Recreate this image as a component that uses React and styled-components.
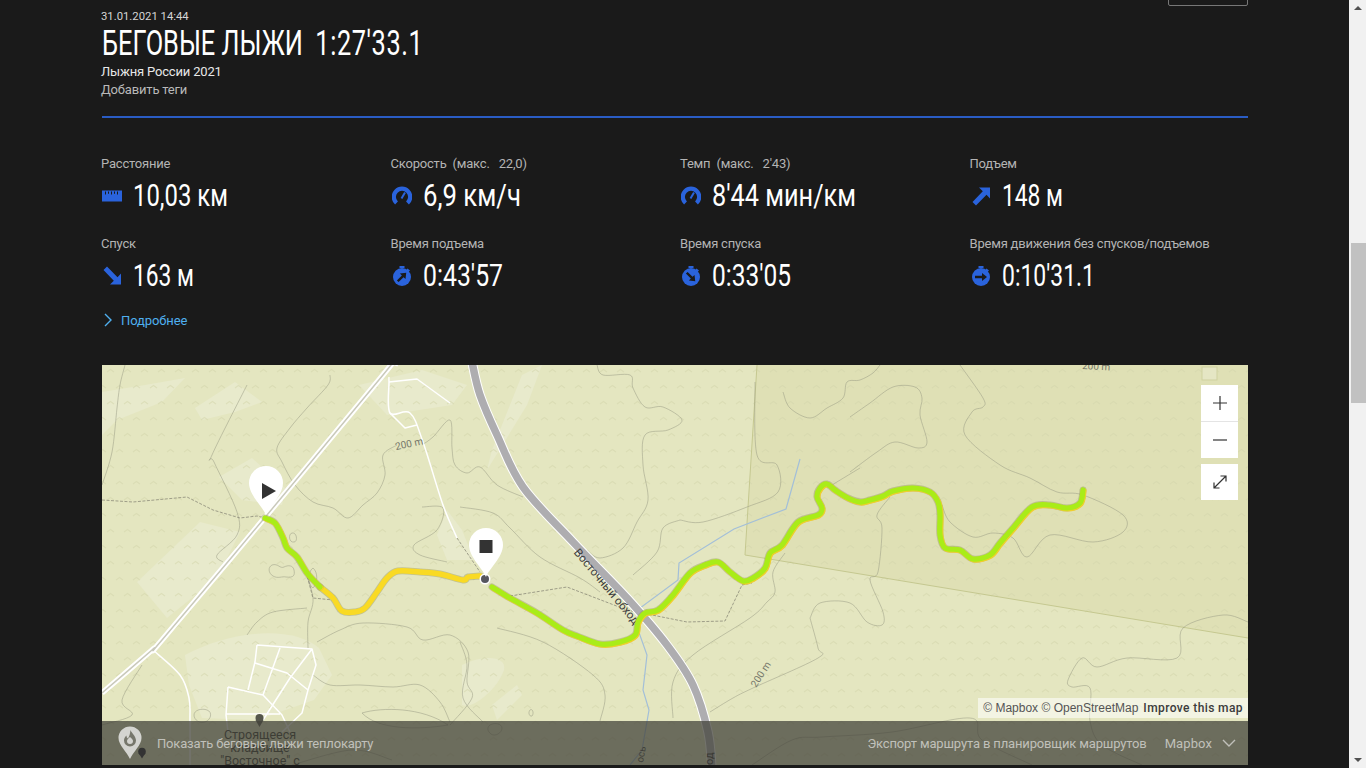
import React from 'react'
import styled, { createGlobalStyle } from 'styled-components'

const GlobalStyle = createGlobalStyle`
    html, body { margin:0; padding:0; height:768px; overflow:hidden; background:#1a1a1a; }
    #root { height:768px; }
    * { box-sizing:border-box; }
`

const BLUE = '#2a63dc'

const Shell = styled.div`
    display:flex;
    height:768px;
    overflow:hidden;
    font-family:Roboto, "Liberation Sans", sans-serif;
    color:#e6e6e6;
    background:#1a1a1a;
`
const Page = styled.main`
    flex:1;
    min-width:0;
    padding:0 101px 0 102px;
`
const Rail = styled.div`
    width:17px;
    background:#f1f1f1;
    display:flex;
    flex-direction:column;
    align-items:center;
    justify-content:space-between;
    padding:6px 0;
`
const RailMiddle = styled.div`
    flex:1;
    width:100%;
    padding:233px 0 0 2px;
`
const Thumb = styled.div`
    width:15px;
    height:160px;
    background:#c1c1c1;
`
const Arrow = styled.div`
    width:0;
    height:0;
    border-left:4px solid transparent;
    border-right:4px solid transparent;
    ${p => p.$down ? 'border-top:4px solid #505050;' : 'border-bottom:4px solid #505050;'}
`
const Header = styled.header`
    display:flex;
    justify-content:space-between;
    align-items:flex-start;
    height:118px;
    border-bottom:2px solid #2a5cc4;
`
const HeaderText = styled.div`
    padding-top:10px;
`
const DateLine = styled.div`
    font-size:11.300px;
    line-height:14px;
    margin-left:-1px;
    color:#d6d6d6;
`
const Title = styled.h1`
    margin:0;
    font:400 34.500px/39px Roboto, sans-serif;
    color:#fff;
    white-space:pre;
    transform:scaleX(.735);
    transform-origin:left center;
`
const TitleTime = styled.span`
    letter-spacing:.8px;
`
const Name = styled.div`
    margin:0 0 0 -1px;
    font-size:13px;
    line-height:18px;
    letter-spacing:-.18px;
    color:#e8e8e8;
`
const Tags = styled.div`
    margin-left:-1px;
    font-size:13px;
    line-height:18px;
    letter-spacing:-.18px;
    color:#b9b9b9;
`
const TopButton = styled.div`
    width:80px;
    height:36px;
    margin-top:-30px;
    border:1px solid #777;
    border-radius:2px;
`
const Stats = styled.section`
    display:grid;
    grid-template-columns:repeat(3, 289.500px) 1fr;
    grid-auto-rows:80px;
    padding-top:36px;
`
const Stat = styled.div`
    display:flex;
    flex-direction:column;
`
const Label = styled.div`
    font-size:13px;
    line-height:20px;
    margin-left:-1px;
    letter-spacing:-.2px;
    color:#b4b4b4;
    white-space:pre;
`
const ValueRow = styled.div`
    display:flex;
    align-items:center;
    gap:11px;
    height:38px;
    margin-top:3px;
`
const IconBox = styled.span`
    width:20px;
    height:20px;
    flex:none;
    display:flex;
`
const Value = styled.span`
    font:400 31px/38px Roboto, sans-serif;
    color:#fff;
    white-space:pre;
    display:inline-block;
    transform:scaleX(${p => p.$squeeze});
    transform-origin:left center;
`
const More = styled.div`
    display:flex;
    align-items:center;
    gap:9px;
    height:20px;
    margin-top:-4px;
    padding-left:2px;
    color:#4fb0f0;
    font-size:13px;
    letter-spacing:-.1px;
`
const MapFrame = styled.section`
    position:relative;
    height:400px;
    margin-top:35px;
    overflow:hidden;
    background:#e6e7c4;
`
const MapSvg = styled.svg`
    display:block;
    width:100%;
    height:100%;
`
const Controls = styled.div`
    position:absolute;
    top:20px;
    right:10px;
    display:flex;
    flex-direction:column;
    gap:6px;
`
const ControlGroup = styled.div`
    width:37px;
    background:#fff;
    display:flex;
    flex-direction:column;
`
const ControlButton = styled.div`
    height:36px;
    display:flex;
    align-items:center;
    justify-content:center;
    color:#333;
    & + & { border-top:1px solid #e4e4e4; height:37px; }
`
const Attribution = styled.div`
    position:absolute;
    right:0;
    top:333px;
    height:20px;
    padding:0 5px;
    display:flex;
    align-items:center;
    gap:5px;
    background:rgba(255,255,255,.55);
    font:12px/20px "Liberation Sans", sans-serif;
    color:#555;
`
const Improve = styled.span`
    color:#3c3c3c;
    font-family:Roboto, sans-serif;
    font-weight:500;
    letter-spacing:.4px;
`
const Bar = styled.div`
    position:absolute;
    left:0;
    right:0;
    bottom:0;
    height:44px;
    background:rgba(66,66,58,.74);
    display:flex;
    align-items:center;
    padding:0 12px 0 16px;
    font-size:13px;
    color:#c0c0ba;
`
const BarLeft = styled.div`
    display:flex;
    align-items:center;
    gap:7px;
    flex:1;
    letter-spacing:-.18px;
`
const BarRight = styled.div`
    display:flex;
    align-items:center;
    letter-spacing:-.15px;
`
const Provider = styled.span`
    margin-left:18px;
    margin-right:10px;
    letter-spacing:.1px;
`

const Ruler = () => (
    <svg width="20" height="20" viewBox="0 0 20 20">
        <path fill={BLUE} fillRule="evenodd" d="M0 4.500h20v11H0zM3 5.500v3h1v-3zM6 5.500v2.200h1v-2.200zM9 5.500v3h1v-3zM12 5.500v2.200h1v-2.200zM15 5.500v3h1v-3z" />
    </svg>
)
const Gauge = () => (
    <svg width="20" height="20" viewBox="0 0 20 20">
        <path fill="none" stroke={BLUE} strokeWidth="4.200" d="M4.500 17A8.200 8.200 0 1 1 15.500 17" />
        <path fill="none" stroke={BLUE} strokeWidth="2" d="M9.500 12.500l3.500-6" />
    </svg>
)
const DiagArrow = ({ down }) => (
    <svg width="20" height="20" viewBox="0 0 20 20">
        <path fill={BLUE} transform={down ? 'translate(0 20) scale(1 -1)' : undefined} d="M8 1.500h11v11l-3.500-3.800L5 19.500 1.500 16 11.800 5.300z" />
    </svg>
)
const Stopwatch = ({ dir }) => {
    const rot = dir === 'up' ? -45 : dir === 'down' ? 45 : 0
    return (
        <svg width="20" height="20" viewBox="0 0 20 20">
            <path fill={BLUE} d="M7.500 0h5v2h-5zM15.500 2.500l2.500 2-1.500 1.500-2.300-2z" />
            <circle cx="10" cy="11" r="9" fill={BLUE} />
            <g transform={`rotate(${rot} 10 11)`}>
                <path fill="#1a1a1a" d="M4 9.800h7V7l5 4-5 4v-2.800H4z" />
            </g>
        </svg>
    )
}

const stats = [
    { label: 'Расстояние', icon: <Ruler />, value: '10,03 км', squeeze: .77 },
    { label: 'Скорость  (макс.   22,0)', icon: <Gauge />, value: '6,9 км/ч', squeeze: .83 },
    { label: "Темп  (макс.   2'43)", icon: <Gauge />, value: "8'44 мин/км", squeeze: .815 },
    { label: 'Подъем', icon: <DiagArrow />, value: '148 м', squeeze: .735 },
    { label: 'Спуск', icon: <DiagArrow down />, value: '163 м', squeeze: .735 },
    { label: 'Время подъема', icon: <Stopwatch dir="up" />, value: "0:43'57", squeeze: .8 },
    { label: 'Время спуска', icon: <Stopwatch dir="down" />, value: "0:33'05", squeeze: .79 },
    { label: 'Время движения без спусков/подъемов', icon: <Stopwatch dir="flat" />, value: "0:10'31.1", squeeze: .74 },
]

// catmull-rom through the traced points, so lines don't look like polygons
const smooth = (str) => {
    const p = str.trim().split(/\s+/).map(s => s.split(',').map(Number))
    let d = `M${p[0][0]} ${p[0][1]}`
    for (let i = 0; i < p.length - 1; i++) {
        const a = p[i - 1] || p[i]
        const b = p[i]
        const c = p[i + 1]
        const e = p[i + 2] || c
        const c1 = [b[0] + (c[0] - a[0]) / 6, b[1] + (c[1] - a[1]) / 6]
        const c2 = [c[0] - (e[0] - b[0]) / 6, c[1] - (e[1] - b[1]) / 6]
        d += `C${c1[0].toFixed(1)} ${c1[1].toFixed(1)} ${c2[0].toFixed(1)} ${c2[1].toFixed(1)} ${c[0]} ${c[1]}`
    }
    return d
}

const contours = [
    '23,0 18,20 15,43 10,87 0,120',
    '228,10 226,20 205,43 188,63 175,83 180,97 193,120 211,137 231,143 246,153 261,140 275,128 283,110 281,90 295,80',
    '320,80 331,72 348,55 350,83 353,100 365,108 378,102 395,120 421,132',
    '145,20 110,90 112,97 135,147 135,170 115,190 121,197',
    '201,200 211,233 206,257 206,283',
    '145,270 155,257 171,247 205,243',
    '215,277 238,265 261,258 305,262 321,275 348,270 366,287 365,317 370,333 348,360',
    '211,310 228,320 258,320 291,322 318,320 338,337 348,357',
    '320,142 341,143 335,165 312,180 318,190 345,197',
    '358,142 391,148 408,163 438,192 478,213 498,227',
    '495,0 501,10 528,10 531,23 543,42 561,42 580,55 566,65 543,70 541,100 546,135 535,157 521,183 498,193 485,185',
    '578,155 561,163 555,187 531,210',
    '681,27 688,43 708,53 725,43 741,33 745,17 758,15 771,8 778,0',
    '653,17 655,90 675,100 676,127 645,142 601,157 578,155',
    '758,103 725,123',
    '683,188 671,207 673,227 665,237 648,253 591,290 571,317 571,353',
    '708,253 718,238 748,238 765,257 780,260 781,247 768,215 776,207 780,163 775,150 788,132',
    '708,253 716,283 716,293 651,323 631,333 608,347',
    '358,277 365,300 361,333 381,357',
    '395,263 441,277 491,310 503,330 498,356',
    '748,52 768,38 791,22 813,22 820,33 818,50 825,77 816,83 793,77 775,87 748,107',
    '858,0 881,33 881,42 870,47 863,70 898,100 928,113 955,127 981,130 1021,150 1021,167 991,177 948,170 925,192 911,173 891,168 871,172 848,157 840,140',
    '1146,257 1121,250 1081,263 1075,293 1025,293 995,302 980,293 966,315 970,322 988,323 988,356 1000,380 1040,400',
    '650,400 690,375 720,372 790,367 868,353 880,375 930,400',
    '0,360 30,350 20,335 40,300',
    '190,400 250,385 290,395',
]

const loops = [
    'M190 168c5 -1 6 9 2 9 -5 1 -6 -8 -2 -9',
    'M170 200c6 -2 8 4 12 2 4 -2 9 -2 10 3 1 5 0 8 -8 7 -4 -1 -8 2 -13 -1 -5 -3 -5 -9 -1 -11',
    'M211 203c5 4 5 15 0 20 -5 -3 -6 -16 0 -20',
    'M92 350c0 -5 8 -7 13 -5 6 2 4 10 -2 12 -5 2 -11 -2 -11 -7',
    'M260 348c20 -6 60 -6 86 12 -30 5 -70 5 -86 -12',
    'M388 360c5 -3 12 -1 12 3 0 5 -7 9 -11 6 -4 -3 -4 -7 -1 -9',
    'M428 345c3 -2 4 4 2 6 -3 1 -4 -4 -2 -6',
]

// light clearings, very faint
const clearings = [
    'M35 217L98 157 138 167 115 213 65 253z',
    'M83 290C130 265 190 260 217 283L230 310 212 335 155 355 100 353 87 320z',
    'M117 112L150 93 183 123 180 140 140 135z',
    'M93 43L133 17 160 37 133 47 100 55z',
    'M0 27L43 20 83 13 60 37 15 55 0 70z',
    'M257 20L320 5 365 20 350 40 285 50z',
    'M335 170L345 145 360 165 372 195 345 195z',
    'M360 300C380 290 405 290 402 305 395 325 370 345 360 340z',
    'M390 340L415 320 420 330 395 355z',
    'M390 85L420 10 440 0 425 40 385 105z',
]

const Track = ({ d, yellow }) => (
    <g fill="none" strokeLinecap="round" strokeLinejoin="round">
        <path d={d} stroke="#8b8b52" strokeOpacity=".4" strokeWidth="7" />
        {yellow && <path d={d} stroke="#f9da24" strokeWidth="5.400" />}
        {!yellow && <path d={d} stroke="#f0cf2c" strokeWidth="5.400" transform="translate(.9 .9)" />}
        {!yellow && <path d={d} stroke="#a9ec18" strokeWidth="5.200" />}
    </g>
)

const Pin = ({ x, y, children }) => (
    <g transform={`translate(${x} ${y})`}>
        <path d="M0 0C-3 -8 -17 -20 -17 -32A17 17 0 0 1 17 -32C17 -20 3 -8 0 0z" fill="#fff" />
        {children}
    </g>
)

const rail = smooth('290,-3 281,10 165,150 60,275 50,285 0,328')
const motorway = smooth('370,-3 378,30 395,70 421,122 471,177 525,233 565,280 591,320 606,367 610,405')

const MapDrawing = () => (
    <MapSvg viewBox="0 0 1146 400">
        <defs>
            <pattern id="dots" width="34" height="32" patternUnits="userSpaceOnUse">
                <path d="M5 7l3.500 -2.500 3.500 2.500M22 7l3.500 -2.500 3.500 2.500M-3 23l3.500 -2.500 3.500 2.500M14 23l3.500 -2.500 3.500 2.500M31 23l3.500 -2.500 3.500 2.500" fill="none" stroke="#d3d5aa" strokeOpacity=".55" strokeWidth="1.200" />
            </pattern>
        </defs>
        <rect width="1146" height="400" fill="#e4e6c0" />
        <g fill="#e8eacc">
            {clearings.map((d, i) => <path key={i} d={d} />)}
        </g>
        <path d="M655 0L643 190 1146 273V0z" fill="#dfe0b5" />
        <rect width="1146" height="400" fill="url(#dots)" />
        <path d="M655 0L643 190 1146 273" fill="none" stroke="#c5c890" strokeWidth="1" />
        <rect x="1100" y="2" width="15" height="13" fill="#e5e6c4" stroke="#cfd1a0" />

        <g fill="none" stroke="#9a9c84" strokeOpacity=".75" strokeWidth=".7">
            {contours.map((d, i) => <path key={i} d={smooth(d)} />)}
            {loops.map((d, i) => <path key={i} d={d} />)}
        </g>
        <g fill="none" stroke="#8b8a78" strokeWidth=".8" strokeDasharray="3 1.500">
            <path d="M0 135L31 137 85 132 111 145 138 153 155 151 163 153" />
            <path d="M203 203L211 233 231 235" />
            <path d="M355 173L378 207" />
            <path d="M408 231L465 222 525 245 585 257 623 256 640 220 650 218" />
        </g>

        <path d="M698 94L684 144 632 164 577 198 576 215 538 243 535 262 545 290 541 325 547 345 540 385 528 400" fill="none" stroke="#a3bfd8" strokeWidth="1.200" />

        <g fill="none" stroke="#fff" strokeLinejoin="round" strokeWidth="1.500">
            <path d={smooth('51,285 78,310 87,333 88,356 88,400')} />
            <path d={smooth('287,12 287,17 288,48 308,48 321,77 341,140 355,173')} />
            <path d="M287 17L315 14 348 38M288 48L303 63 315 60" />
            <path d="M155 280L210 284 214 300 206 325 200 348 180 367M155 280L153 297 146 325M178 283L161 330M153 298L185 308 206 325M210 284L188 313 161 355M126 322L161 330 180 350 188 367M126 322L124 350 126 367M124 349L178 349" />
        </g>

        <g fill="none" strokeLinejoin="round">
            <path d={rail} stroke="#fff" strokeWidth="5.500" />
            <path d={rail} stroke="#c9c9bb" strokeWidth="1.500" />
            <path d="M296 0L280 -6" stroke="#fff" strokeWidth="3" />
            <path d={motorway} stroke="#fff" strokeWidth="9.500" />
            <path d={motorway} stroke="#aeadb0" strokeWidth="7.500" />
        </g>
        <text transform="translate(504 222) rotate(50)" textAnchor="middle" dominantBaseline="middle" fontFamily="Roboto, sans-serif" fontSize="11.500" fill="#3c3c3c">Восточный обход</text>
        <text transform="translate(294 85) rotate(-12)" fontFamily="Roboto, sans-serif" fontSize="10" fill="#75766a">200 m</text>
        <text transform="translate(654 323) rotate(-57)" fontFamily="Roboto, sans-serif" fontSize="10" fill="#75766a">200 m</text>
        <text transform="translate(980 4) rotate(3)" fontFamily="Roboto, sans-serif" fontSize="10" fill="#75766a">200 m</text>

        <Track yellow d={smooth('218,222 231,233 240,246 253,247 263,243 275,227 285,213 296,206 318,207 338,209 361,215 366,212 378,211')} />
        <Track d={smooth('163,153 173,158 181,173 185,183 195,192 205,208 218,222')} />
        <Track d={smooth('390,222 408,233 435,248 461,265 475,271 498,279 518,277 533,270 536,257 543,248 556,245 571,230 588,208 603,200 616,197 628,207 641,216 651,213 663,203 668,188 680,180 696,157 716,150 720,143 715,132 718,123 725,119 733,125 746,133 758,137 768,135 781,131 791,126 811,123 828,127 836,137 838,150 838,170 843,183 858,185 871,194 888,190 898,178 911,163 930,142 948,140 965,143 978,138 981,125')} />

        <circle cx="383" cy="214" r="5.500" fill="#fff" />
        <circle cx="383" cy="214" r="4" fill="#56565e" />
        <Pin x={164} y={150}>
            <path d="M-4 -32V-16L10 -24z" fill="#333" />
        </Pin>
        <Pin x={384} y={212}>
            <rect x="-6.500" y="-37" width="13" height="13" fill="#333" />
        </Pin>

        <circle cx="157.500" cy="353" r="4" fill="#55564c" />
        <path d="M153.500 355L157.500 362 161.500 355z" fill="#55564c" />
        <g fontFamily="Roboto, sans-serif" fontSize="12.500" fill="#2e2e2a" textAnchor="middle">
            <text x="158" y="374">Строящееся</text>
            <text x="158" y="387">кладбище</text>
            <text x="158" y="399.500">"Восточное" с</text>
        </g>
        <text transform="translate(541 398) rotate(-80)" fontFamily="Roboto, sans-serif" fontSize="10" fill="#3c3c3c">ось</text>
        <text transform="translate(611 400) rotate(-90)" fontFamily="Roboto, sans-serif" fontSize="11" fill="#222">од</text>
    </MapSvg>
)

const HeatIcon = () => (
    <svg width="32" height="34" viewBox="0 0 32 34">
        <path d="M12 33C9 26 .5 19 .5 12A11.500 11.500 0 0 1 23.500 12C23.500 19 15 26 12 33z" fill="#d4d4d0" />
        <path d="M12.500 4c1 3 5.500 6 5.500 10.500a6 6 0 0 1 -12 0c0 -2 1 -4 2.500 -5 0 1.500 .5 2.500 1.500 3 1.500 -2.500 2 -5 2.500 -8.500z" fill="#77776c" />
        <path d="M12 18a3 3 0 0 1 -3 -3c0 -1.500 1.500 -2.500 3 -4 1.500 1.500 3 2.500 3 4a3 3 0 0 1 -3 3z" fill="#d4d4d0" />
        <circle cx="24" cy="25.500" r="3.800" fill="#333" />
        <path d="M20.500 27L24 32.500 27.500 27z" fill="#333" />
    </svg>
)

export default function App() {
    return (
        <Shell>
            <GlobalStyle />
            <Page>
                <Header>
                    <HeaderText>
                        <DateLine>31.01.2021 14:44</DateLine>
                        <Title>{'БЕГОВЫЕ ЛЫЖИ  '}<TitleTime>{"1:27'33.1"}</TitleTime></Title>
                        <Name>Лыжня России 2021</Name>
                        <Tags>Добавить теги</Tags>
                    </HeaderText>
                    <TopButton />
                </Header>
                <Stats>
                    {stats.map(s => (
                        <Stat key={s.label}>
                            <Label>{s.label}</Label>
                            <ValueRow>
                                <IconBox>{s.icon}</IconBox>
                                <Value $squeeze={s.squeeze}>{s.value}</Value>
                            </ValueRow>
                        </Stat>
                    ))}
                </Stats>
                <More>
                    <svg width="8" height="14" viewBox="0 0 8 14"><path d="M1 1l6 6-6 6" fill="none" stroke="#4fb0f0" strokeWidth="1.400" /></svg>
                    Подробнее
                </More>
                <MapFrame>
                    <MapDrawing />
                    <Controls>
                        <ControlGroup>
                            <ControlButton>
                                <svg width="14" height="14" viewBox="0 0 14 14"><path d="M7 0v14M0 7h14" stroke="#333" strokeWidth="1.200" /></svg>
                            </ControlButton>
                            <ControlButton>
                                <svg width="14" height="14" viewBox="0 0 14 14"><path d="M0 7h14" stroke="#333" strokeWidth="1.200" /></svg>
                            </ControlButton>
                        </ControlGroup>
                        <ControlGroup>
                            <ControlButton>
                                <svg width="14" height="14" viewBox="0 0 14 14"><path d="M1 13L13 1M7.500 1H13V6.500M1 7.500V13H6.500" fill="none" stroke="#333" strokeWidth="1.200" /></svg>
                            </ControlButton>
                        </ControlGroup>
                    </Controls>
                    <Attribution>
                        <span>© Mapbox © OpenStreetMap</span>
                        <Improve>Improve this map</Improve>
                    </Attribution>
                    <Bar>
                        <BarLeft>
                            <HeatIcon />
                            Показать беговые лыжи теплокарту
                        </BarLeft>
                        <BarRight>
                            Экспорт маршрута в планировщик маршрутов
                            <Provider>Mapbox</Provider>
                            <svg width="14" height="8" viewBox="0 0 14 8"><path d="M1 1l6 6 6-6" fill="none" stroke="#c0c0ba" strokeWidth="1.400" /></svg>
                        </BarRight>
                    </Bar>
                </MapFrame>
            </Page>
            <Rail>
                <Arrow />
                <RailMiddle><Thumb /></RailMiddle>
                <Arrow $down />
            </Rail>
        </Shell>
    )
}
